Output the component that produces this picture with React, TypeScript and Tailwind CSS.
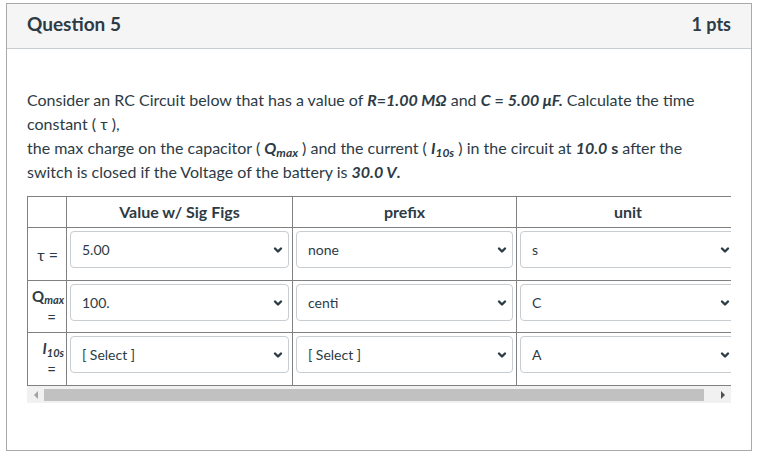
import React from 'react';

const Chevron = () => (
    <svg width="10" height="8" viewBox="0 0 10 8" className="shrink-0">
        <path d="M2 2.5 L5 5.5 L8 2.5" fill="none" stroke="#2d3b45" strokeWidth="2.4" strokeLinecap="round" strokeLinejoin="round" />
    </svg>
);

const Select: React.FC<{ value: string }> = ({ value }) => (
    <div className="h-[37px] mb-[10px] w-full border border-[#c7cdd1] rounded-[4px] bg-white flex items-center justify-between pl-[11px] pr-[5px] text-[14px] text-[#2d3b45]">
        <span>{value}</span>
        <Chevron />
    </div>
);

const rows = [
    { label: 'tau', value: '5.00', prefix: 'none', unit: 's' },
    { label: 'q', value: '100.', prefix: 'centi', unit: 'C' },
    { label: 'i', value: '[ Select ]', prefix: '[ Select ]', unit: 'A' },
];

const Label: React.FC<{ kind: string }> = ({ kind }) => {
    if (kind === 'tau')
        return (
            <div className="flex flex-col items-end pr-[7px] leading-[21px] text-[16px]">
                <div>τ =</div>
            </div>
        );
    if (kind === 'q')
        return (
            <div className="flex flex-col items-end pr-[9px] leading-[21px]">
                <div className="mr-[-8px] whitespace-nowrap font-bold">
                    Q<sub className="italic text-[11px]">max</sub>
                </div>
                <div>=</div>
            </div>
        );
    return (
        <div className="flex flex-col items-end pr-[9px] leading-[21px]">
            <div className="mr-[-8px] whitespace-nowrap font-bold italic">
                I<sub className="text-[11px]">10s</sub>
            </div>
            <div>=</div>
        </div>
    );
};

export default function App() {
    return (
        <div className="w-[764px] h-[457px] bg-white pt-[3px] pl-[6px] text-[#2d3b45]" style={{ fontFamily: 'Lato, "Noto Sans", sans-serif' }}>
            <div className="w-[746px] h-[448px] border border-[#a9a9a9] flex flex-col">
                <div className="h-[45px] shrink-0 bg-[#f5f5f5] border-b border-[#c7cdd1] flex items-center justify-between px-[20px] pb-[4px]">
                    <span className="text-[19px] font-bold">Question 5</span>
                    <span className="text-[18px] font-bold">1 pts</span>
                </div>
                <div className="pt-[39px] px-[20px]">
                    <p className="text-[16px] leading-[24px] whitespace-nowrap">
                        Consider an RC Circuit below that has a value of <b><i>R</i>=<i>1.00 MΩ</i></b> and <b><i>C</i> = <i>5.00 μF.</i></b> Calculate the time
                        <br />
                        constant ( τ ),
                        <br />
                        the max charge on the capacitor ( <b><i>Q<sub>max</sub></i></b> ) and the current ( <b><i>I<sub>10s</sub></i></b> ) in the circuit at <b><i>10.0</i> s</b> after the
                        <br />
                        switch is closed if the Voltage of the battery is <b><i>30.0 V</i>.</b>
                    </p>
                    <div className="mt-[12px] w-[704px] overflow-hidden">
                        <table className="w-[712px] table-fixed border-collapse text-[15px]">
                            <colgroup>
                                <col className="w-[39px]" />
                                <col className="w-[226px]" />
                                <col className="w-[224px]" />
                                <col className="w-[223px]" />
                            </colgroup>
                            <thead>
                                <tr className="h-[31px] text-[16px]">
                                    <th className="border border-[#808080]"></th>
                                    <th className="border border-[#808080] font-bold">Value w/ Sig Figs</th>
                                    <th className="border border-[#808080] font-bold">prefix</th>
                                    <th className="border border-[#808080] font-bold">unit</th>
                                </tr>
                            </thead>
                            <tbody>
                                {rows.map((r, i) => (
                                    <tr key={i} className={i === 1 ? 'h-[52px]' : 'h-[53px]'}>
                                        <td className="border border-[#808080] px-[1px] align-middle">
                                            <Label kind={r.label} />
                                        </td>
                                        <td className="border border-[#808080] p-[3px] pb-0 align-top">
                                            <Select value={r.value} />
                                        </td>
                                        <td className="border border-[#808080] p-[3px] pb-0 align-top">
                                            <Select value={r.prefix} />
                                        </td>
                                        <td className="border border-[#808080] p-[3px] pb-0 align-top">
                                            <Select value={r.unit} />
                                        </td>
                                    </tr>
                                ))}
                            </tbody>
                        </table>
                        <div className="h-[17px] bg-[#f1f1f1] flex items-center">
                            <div className="w-[17px] h-full flex items-center justify-center">
                                <svg width="6" height="8" viewBox="0 0 6 8">
                                    <path d="M5 0 L1 4 L5 8 Z" fill="#a3a3a3" />
                                </svg>
                            </div>
                            <div className="w-[660px] h-[12px] bg-[#c1c1c1]" />
                            <div className="flex-1 h-full flex items-center justify-end pr-[5px]">
                                <svg width="6" height="8" viewBox="0 0 6 8">
                                    <path d="M1 0 L5 4 L1 8 Z" fill="#505050" />
                                </svg>
                            </div>
                        </div>
                    </div>
                </div>
            </div>
        </div>
    );
}
